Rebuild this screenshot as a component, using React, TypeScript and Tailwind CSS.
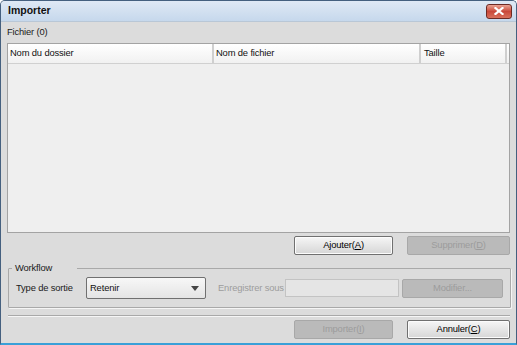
import React from "react";

const font = { fontFamily: '"Liberation Sans", Arial, sans-serif' };

function Btn({ children, disabled, w }: { children: React.ReactNode; disabled?: boolean; w: string }) {
  return (
    <div
      className={
        "h-[19px] flex items-center justify-center rounded-[2px] border text-[9.4px] whitespace-nowrap " +
        w +
        " " +
        (disabled
          ? "border-[#a8a8a8] bg-[#bababa] text-[#9c9c9c]"
          : "border-[#707070] bg-gradient-to-b from-[#f6f6f6] to-[#d6d6d6] text-black shadow-[inset_0_0_0_1px_#fcfcfc]")
      }
    >
      {children}
    </div>
  );
}

export default function App() {
  return (
    <div
      style={font}
      className="w-[517px] h-[345px] flex flex-col bg-[#dcdcdc] border border-[#45607f] rounded-t-[5px] border-b-[2px] border-b-[#3aa0d8] overflow-hidden"
    >
      <div className="h-[21px] shrink-0 flex items-center justify-between pl-[7px] pr-[4px] bg-gradient-to-b from-[#dfe9f5] to-[#c6d8ec] border-b border-[#b9c7d6]">
        <span className="text-[10.5px] font-bold text-[#111]">Importer</span>
        <div className="w-[26px] h-[15px] rounded-[3px] border border-[#6d2a24] bg-gradient-to-b from-[#e9a394] via-[#c9483a] to-[#d9705c] flex items-center justify-center">
          <svg width="10" height="8" viewBox="0 0 10 8">
            <path d="M1.5 1 L8.5 7 M8.5 1 L1.5 7" stroke="#fff" strokeWidth="2.2" strokeLinecap="square" />
          </svg>
        </div>
      </div>
      <div className="flex-1 flex flex-col pl-[5px] pr-[6px] border-l-[1px] border-[#dcdcdc] text-[9.4px] tracking-[-0.15px] whitespace-nowrap">
        <div className="h-[21px] flex items-center text-[#1a1a1a]">Fichier (0)</div>
        <div className="h-[190px] border border-[#a3a3a3] bg-[#efefef] flex flex-col">
          <div className="h-[20px] flex bg-gradient-to-b from-[#ffffff] to-[#f1f1f1] border-b border-[#d0d0d0] text-[#111]">
            <div className="w-[206px] flex items-center pl-[2px] border-r-2 border-[#cfcfcf]">Nom du dossier</div>
            <div className="w-[207px] flex items-center pl-[2px] border-r-2 border-[#cfcfcf]">Nom de fichier</div>
            <div className="flex-1 flex items-center pl-[3px] border-r-2 border-[#cfcfcf] mr-[2px]">Taille</div>
          </div>
        </div>
        <div className="mt-[3px] flex justify-end gap-[14px]">
          <Btn w="w-[99px]">
            <span>
              Ajouter(<span className="underline">A</span>)
            </span>
          </Btn>
          <Btn w="w-[103px]" disabled>
            <span>
              Supprimer(<span className="underline">D</span>)
            </span>
          </Btn>
        </div>
        <fieldset className="mt-[7px] ml-[1px] mr-[2px] border border-[#a9a9a9] shadow-[1px_1px_0_#f5f5f5] h-[46px] px-[7px] pb-[4px] rounded-[1px]">
          <legend className="text-[#1a1a1a] px-[3px] ml-[-4px] leading-[12px]">Workflow&nbsp;&nbsp;&nbsp;&nbsp;&nbsp;&nbsp;&nbsp;&nbsp;&nbsp;</legend>
          <div className="flex items-center mt-[3px]">
            <span className="w-[70px] text-[#1a1a1a]">Type de sortie</span>
            <div className="w-[120px] h-[22px] border border-[#707070] rounded-[2px] bg-gradient-to-b from-[#f7f7f7] to-[#e4e4e4] flex items-center justify-between pl-[3px] pr-[6px]">
              <span className="text-[#111]">Retenir</span>
              <svg width="8" height="5" viewBox="0 0 8 5">
                <path d="M0 0 L8 0 L4 5 Z" fill="#444" />
              </svg>
            </div>
            <span className="ml-[12px] w-[67px] text-[#9d9d9d]">Enregistrer sous</span>
            <div className="w-[114px] h-[18px] border border-[#c3c3c3] bg-[#e5e5e5]" />
            <div className="ml-[3px]">
              <Btn w="w-[101px]" disabled>
                Modifier...
              </Btn>
            </div>
          </div>
        </fieldset>
        <div className="mt-[7px] ml-[1px] border-t border-[#a9a9a9] border-b border-b-[#f6f6f6]" />
        <div className="mt-[3px] flex justify-end gap-[14px]">
          <Btn w="w-[99px]" disabled>
            <span>
              Importer(<span className="underline">I</span>)
            </span>
          </Btn>
          <Btn w="w-[103px]">
            <span>
              Annuler(<span className="underline">C</span>)
            </span>
          </Btn>
        </div>
      </div>
    </div>
  );
}
